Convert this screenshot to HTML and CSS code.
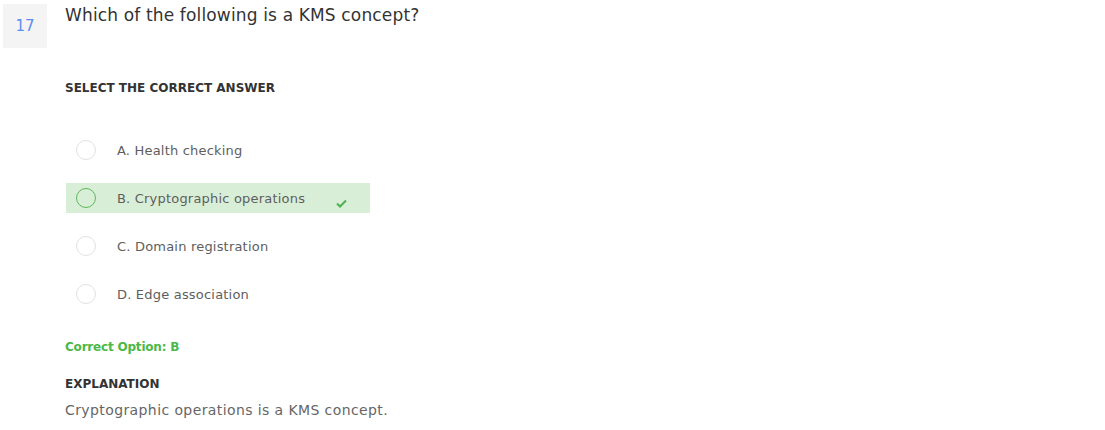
FILE: index.html
```html
<!DOCTYPE html>
<html>
<head>
<meta charset="utf-8">
<link rel="stylesheet" href="styles.css">
</head>
<body>
<div class="question">
  <div class="qnum">17</div>
  <div class="qbody">
    <div class="qtext">Which of the following is a KMS concept?</div>
    <div class="label select-label">SELECT THE CORRECT ANSWER</div>
    <ul class="options">
      <li class="option"><span class="radio"></span><span class="otext">A. Health checking</span></li>
      <li class="option correct"><span class="radio"></span><span class="otext">B. Cryptographic operations</span>
        <svg class="check" width="11" height="9" viewBox="0 0 11 9"><path d="M1 4.5 L4 7.5 L10 1.5" fill="none" stroke="#4caf50" stroke-width="2"/></svg>
      </li>
      <li class="option"><span class="radio"></span><span class="otext">C. Domain registration</span></li>
      <li class="option"><span class="radio"></span><span class="otext">D. Edge association</span></li>
    </ul>
    <div class="correct-option">Correct Option: B</div>
    <div class="label explanation-label">EXPLANATION</div>
    <div class="explanation">Cryptographic operations is a KMS concept.</div>
  </div>
</div>
</body>
</html>
```
FILE: styles.css
```css
body {
  margin: 0;
  font-family: "DejaVu Sans", sans-serif;
  color: #333;
  background: #fff;
}
.question {
  display: flex;
  align-items: flex-start;
}
.qnum {
  margin: 4px 0 0 3px;
  width: 44px;
  height: 44px;
  background: #f4f4f4;
  color: #5b8def;
  font-size: 15px;
  display: flex;
  align-items: center;
  justify-content: center;
  flex: none;
}
.qbody {
  padding-left: 18px;
}
.qtext {
  font-size: 17px;
  line-height: 20px;
  margin-top: 5px;
  color: #333;
  letter-spacing: 0.15px;
}
.label {
  font-size: 12px;
  line-height: 16px;
  font-weight: 700;
  color: #333;
}
.select-label {
  margin-top: 55px;
}
.options {
  list-style: none;
  margin: 39px 0 0 1px;
  padding: 0;
  width: 304px;
}
.option {
  height: 30px;
  display: flex;
  align-items: center;
  margin-bottom: 18px;
  font-size: 13px;
  color: #5e5e5e;
}
.option:last-child {
  margin-bottom: 0;
}
.option.correct {
  background: #d9eed7;
}
.radio {
  width: 18px;
  height: 18px;
  border: 1px solid #e2e2e2;
  border-radius: 50%;
  margin-left: 10px;
  margin-right: 21px;
  flex: none;
}
.correct .radio {
  border-color: #5cb85c;
}
.otext {
  letter-spacing: 0.2px;
}
.check {
  margin-left: auto;
  margin-right: 23px;
  margin-top: 10px;
}
.correct-option {
  margin-top: 30px;
  font-size: 12px;
  line-height: 16px;
  font-weight: 600;
  color: #4cb848;
  letter-spacing: -0.2px;
}
.explanation-label {
  margin-top: 21px;
}
.explanation {
  margin-top: 8px;
  font-size: 14px;
  line-height: 20px;
  color: #666;
  letter-spacing: 0.4px;
}
```
